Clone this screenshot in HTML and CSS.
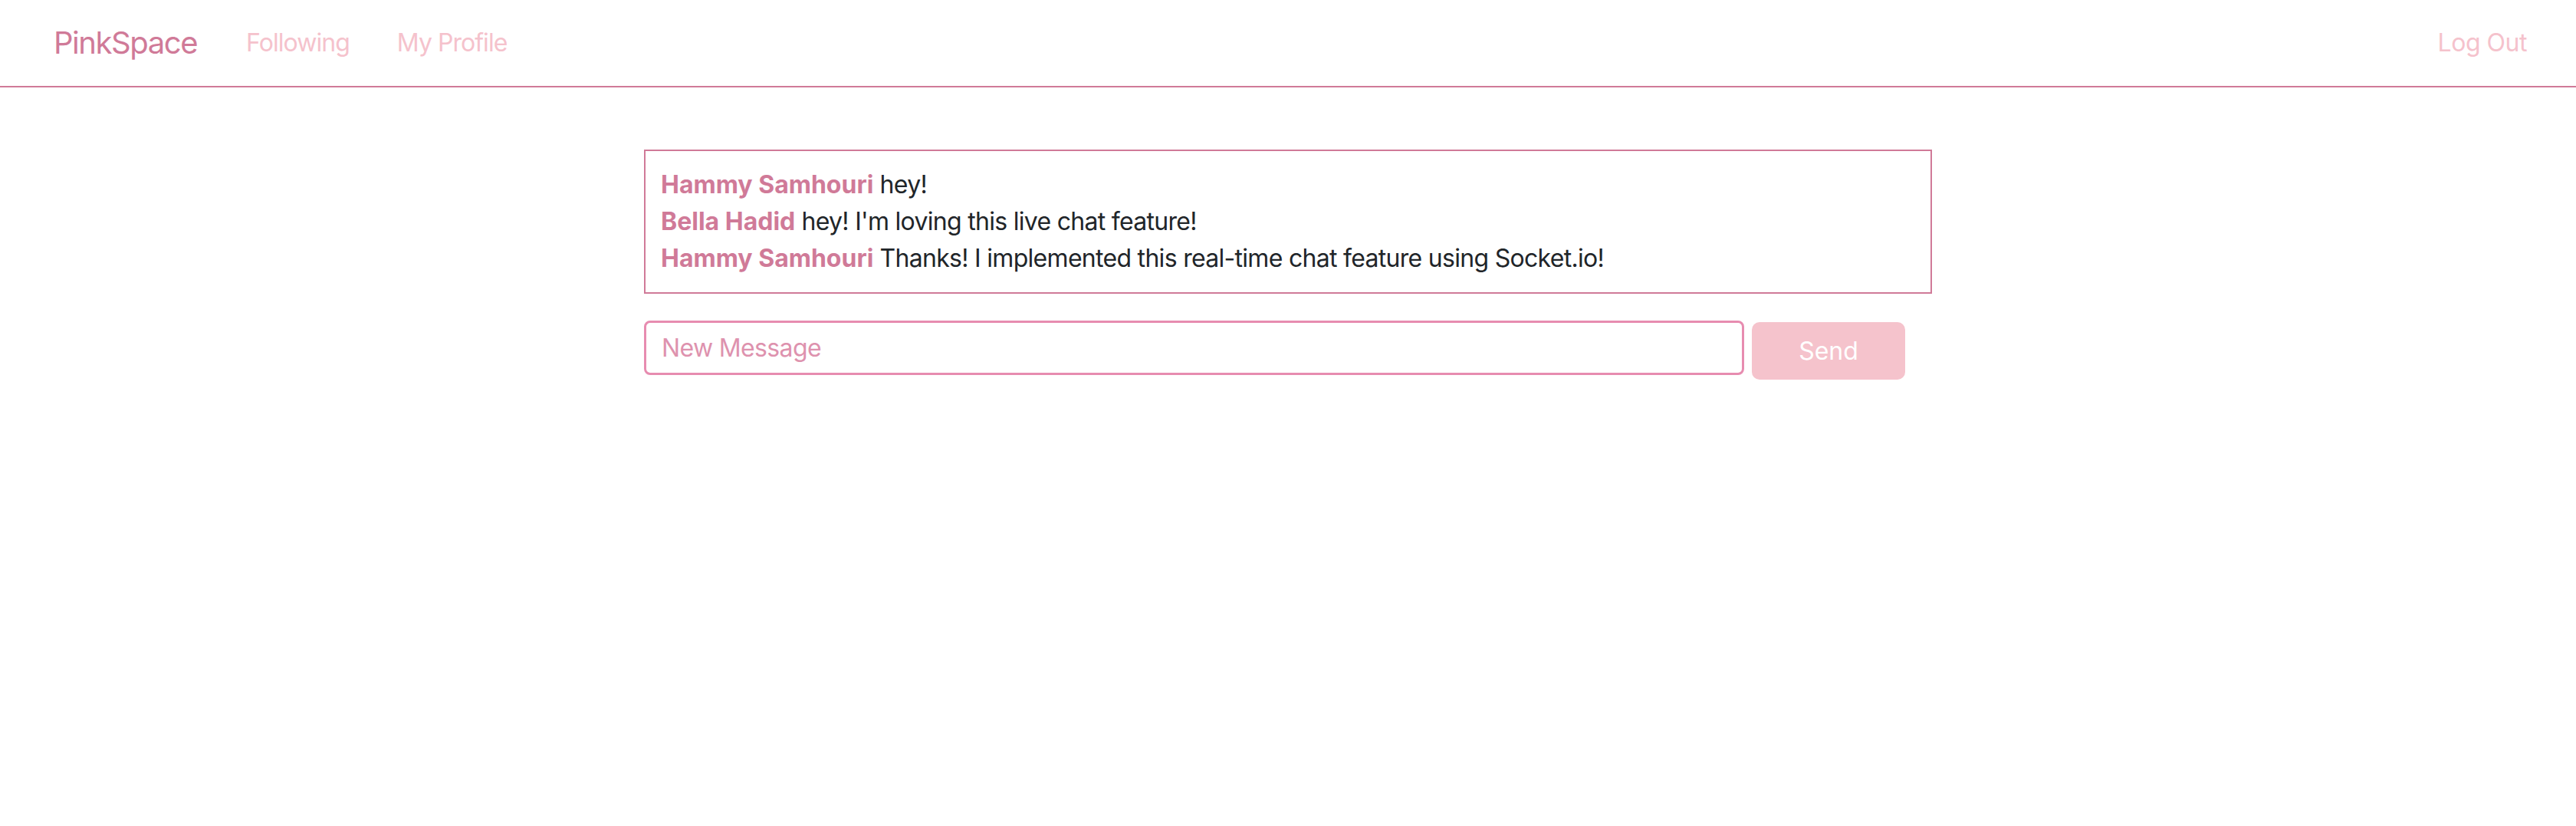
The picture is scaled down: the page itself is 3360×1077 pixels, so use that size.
FILE: index.html
```html
<!DOCTYPE html>
<html lang="en">
<head>
<meta charset="utf-8">
<title>PinkSpace</title>
<link rel="stylesheet" href="styles.css">
</head>
<body>
<nav class="navbar">
  <a class="brand" href="#">PinkSpace</a>
  <div class="nav-links">
    <a class="nav-link" href="#">Following</a>
    <a class="nav-link" href="#">My Profile</a>
  </div>
  <div class="nav-right">
    <a class="nav-link logout" href="#">Log Out</a>
  </div>
</nav>
<main class="container">
  <div class="chat-box">
    <div class="msg"><span class="author">Hammy Samhouri</span> hey!</div>
    <div class="msg"><span class="author">Bella Hadid</span> hey! I'm loving this live chat feature!</div>
    <div class="msg"><span class="author">Hammy Samhouri</span> Thanks! I implemented this real-time chat feature using Socket.io!</div>
  </div>
  <form class="chat-form">
    <input class="chat-input" type="text" placeholder="New Message">
    <button class="send-btn" type="button">Send</button>
  </form>
</main>
</body>
</html>
```

FILE: styles.css
```css
* { box-sizing: border-box; }
html, body { margin: 0; padding: 0; background: #fff; }
body {
  font-family: Inter, "Noto Sans", "Liberation Sans", sans-serif;
  font-size: 32px;
  line-height: 48px;
  color: #212529;
}
a { text-decoration: none; }

.navbar {
  display: flex;
  align-items: center;
  padding: 16px 31px 16px 70px;
  border-bottom: 2px solid #d07a98;
}
.brand {
  font-size: 40px;
  line-height: 60px;
  padding: 10px 0;
  color: #d07a98;
  margin-right: 33px;
  letter-spacing: -0.036em;
}
.nav-links { display: flex; }
.nav-right { margin-left: auto; display: flex; }
.nav-link {
  display: block;
  padding: 16px 31px;
  color: #f5c2cc;
  letter-spacing: -0.03em;
}
.nav-link.logout {
  letter-spacing: -0.015em;
  padding-right: 33px;
}

.container {
  width: 1680px;
  margin: 81px auto 0;
}
.chat-box {
  border: 2px solid #d07a98;
  padding: 20px;
}
.msg { letter-spacing: -0.022em; }
.author {
  font-weight: 700;
  color: #d07a98;
  letter-spacing: 0;
}

.chat-form {
  display: flex;
  align-items: flex-start;
  margin-top: 35px;
}
.chat-input {
  width: 1435px;
  height: 71px;
  border: 3px solid #e78cb0;
  border-radius: 8px;
  padding: 0 20px;
  font-family: inherit;
  font-size: 32px;
  letter-spacing: -0.02em;
  color: #212529;
  outline: none;
}
.chat-input::placeholder { color: #de92ae; opacity: 1; }
.send-btn {
  margin: 2px 0 0 10px;
  width: 200px;
  height: 75px;
  border: none;
  border-radius: 10px;
  background: #f5c3cc;
  color: #fff;
  font-family: inherit;
  font-size: 32px;
}
```
